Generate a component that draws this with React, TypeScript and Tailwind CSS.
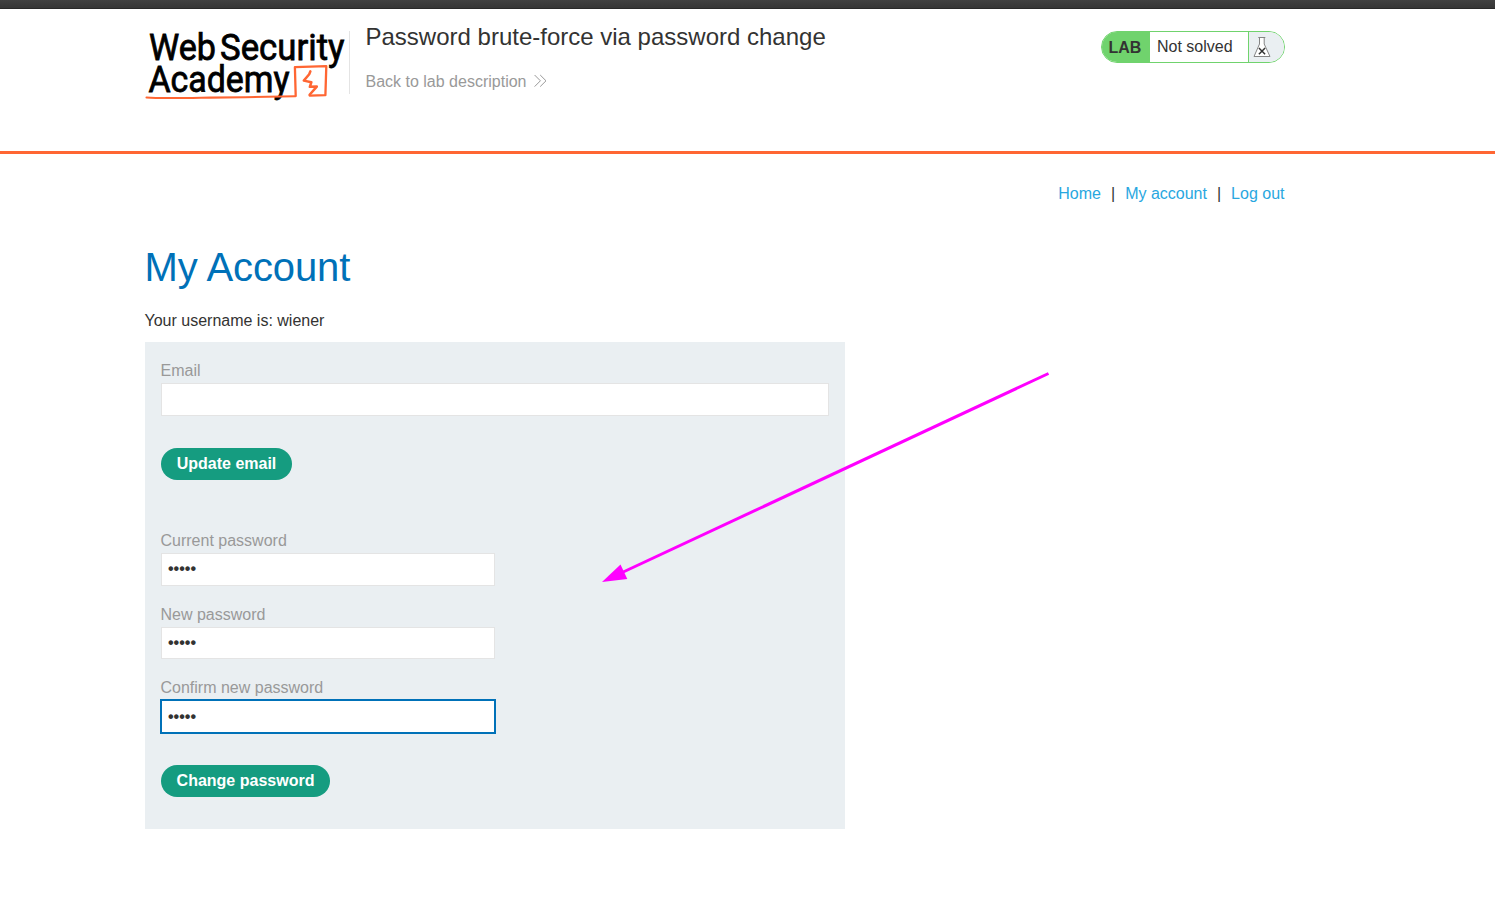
import React from "react";

function Logo() {
  return (
    <svg
      className="block h-[76px] w-[204px] shrink-0 overflow-visible"
      viewBox="145 28 204 76"
      role="img"
      aria-label="Web Security Academy"
    >
      <g fill="#000" stroke="#000" strokeWidth="0.8" fontFamily="Roboto, sans-serif" fontWeight="400" fontSize="37.5">
        <text x="149" y="59.7" textLength="67" lengthAdjust="spacingAndGlyphs">Web</text>
        <text x="220" y="59.7" textLength="124.5" lengthAdjust="spacingAndGlyphs">Security</text>
        <text x="148.5" y="92" textLength="141" lengthAdjust="spacingAndGlyphs">Academy</text>
      </g>
      <g fill="none" stroke="#ff6633" strokeLinecap="round" strokeLinejoin="round">
        <path strokeWidth="2.1" d="M146.5 97.5C160 98.6 185 98 210 97.6C240 97.3 262 97 295 96.3" />
        <path strokeWidth="2.3" d="M295.7 96L294.9 67.2L326.3 66.2L325.4 95.2L309.8 95.7" />
        <path strokeWidth="2.5" d="M310.4 71.3L309.2 74.3L303.8 80.6L311.4 82.2L309.8 86.8L316.8 86.6L309.6 94.8" />
      </g>
    </svg>
  );
}

function Flask() {
  return (
    <svg className="h-[22px] w-[18px] shrink-0" viewBox="0 0 18 22" fill="none">
      <path d="M5.3 1.5H12.3M6.5 1.5V8L1 20.5H17L11.2 8V1.5" fill="#fff" stroke="#858585" />
      <path d="M5.9 12L12.1 18.2M12.1 12L5.9 18.2" stroke="#333" strokeWidth="1.5" />
    </svg>
  );
}

function Field({ label, className, type = "password", value = "" }: {
  label: string;
  className: string;
  type?: string;
  value?: string;
}) {
  return (
    <label className="block">
      <span className="block h-[25px] leading-[25px] text-[#999]">{label}</span>
      <input
        type={type}
        defaultValue={value}
        className={`block border bg-white pr-1.5 pl-[6.5px] font-bold leading-5 text-[#333332] outline-none ${className}`}
      />
    </label>
  );
}

function Button({ children, className }: { children: React.ReactNode; className: string }) {
  return (
    <button type="button" className={`block h-8 rounded-full bg-[#159c80] pl-px text-center font-bold leading-8 text-white ${className}`}>
      {children}
    </button>
  );
}

export default function App() {
  return (
    <div className="relative h-[910px] w-[1495px] overflow-hidden bg-white font-['Liberation_Sans',Arial,sans-serif] text-base text-[#333332]">
      <div className="h-[9px] border-b border-[#292929] bg-linear-to-b from-[#414141] to-[#363636]" />
      <header className="h-[145px] border-b-3 border-[#ff6633]">
        <div className="mx-auto w-[1206px]">
          <div className="flex w-[1140px] items-start">
            <div className="pt-[19px]">
              <Logo />
            </div>
            <div className="mt-[22px] h-[63px] w-px bg-[#e4e4e4]" />
            <div className="ml-4 pt-[13px]">
              <h2 className="text-2xl leading-[30px]">Password brute-force via password change</h2>
              <a className="mt-5 flex items-center leading-5 text-[#999]">
                Back to lab description
                <svg className="mb-0.5 ml-[7px] h-3.5 w-3.5" viewBox="0 0 14 14" fill="none" stroke="#999">
                  <path d="M1.6 1L7.4 6.8L1.6 12.6M7.2 1L13 6.8L7.2 12.6" />
                </svg>
              </a>
            </div>
            <div className="mt-[22px] ml-auto flex h-8 w-[184px] overflow-hidden rounded-full border border-[#70d36d] bg-white">
              <span className="w-12 bg-[#70d36d] pl-[7px] font-bold leading-[31px]">LAB</span>
              <span className="w-[98px] pl-[7.5px] leading-[29px]">Not solved</span>
              <span className="flex flex-1 items-center border-l border-[#70d36d] bg-[#eaeff2] pl-1">
                <Flask />
              </span>
            </div>
          </div>
        </div>
      </header>
      <main className="mx-auto w-[1206px]">
        <nav className="flex w-[1140px] justify-end gap-2.5 pt-[30px] leading-5 text-[#29a7df]">
          <a>Home</a>
          <span className="text-[#333332]">|</span>
          <a>My account</a>
          <span className="text-[#333332]">|</span>
          <a>Log out</a>
        </nav>
        <h1 className="mt-[39px] text-[40px] leading-[48px] tracking-[-0.1px] text-[#0071b8]">My Account</h1>
        <p className="mt-5 leading-5">Your username is: wiener</p>
        <section className="mt-[11px] h-[487px] w-[700px] bg-[#eaeff2] px-4 pt-4">
          <form>
            <Field label="Email" type="text" className="h-[33px] w-[668px] border-[#e4e4e4]" />
            <Button className="mt-8 w-[131px]">Update email</Button>
          </form>
          <form className="pt-12">
            <Field label="Current password" value="peter" className="h-[33px] w-[334px] border-[#e4e4e4] pb-0.5" />
            <div className="mt-4">
              <Field label="New password" value="hello" className="h-8 w-[334px] border-[#e4e4e4]" />
            </div>
            <div className="mt-4">
              <Field
                label="Confirm new password"
                value="hello"
                className="h-[33px] w-[334px] border-[#0071b8] ring-1 ring-[#0071b8]"
              />
            </div>
            <Button className="mt-8 w-[169px]">Change password</Button>
          </form>
        </section>
      </main>
      <svg className="pointer-events-none absolute left-[600px] top-[370px] h-[215px] w-[452px]" viewBox="600 370 452 215">
        <path d="M1048.5 373.5L620 573.5" stroke="#ff00ff" strokeWidth="3" />
        <path d="M602 582L620.5 564.5L627.3 579Z" fill="#ff00ff" />
      </svg>
    </div>
  );
}
